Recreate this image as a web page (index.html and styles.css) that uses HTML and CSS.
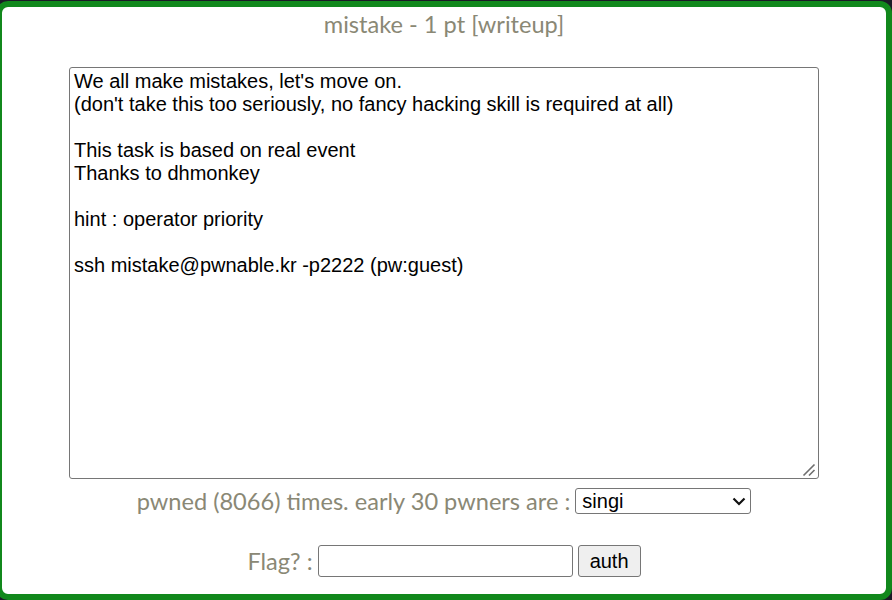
FILE: index.html
```html
<!DOCTYPE html>
<html>
<head>
<meta charset="utf-8">
<link rel="stylesheet" href="styles.css">
</head>
<body>
<div class="frame">
  <div class="title">mistake - 1 pt [writeup]</div>
  <div class="desc-wrap">
    <textarea class="desc">We all make mistakes, let's move on.
(don't take this too seriously, no fancy hacking skill is required at all)

This task is based on real event
Thanks to dhmonkey

hint : operator priority

ssh mistake@pwnable.kr -p2222 (pw:guest)</textarea>
    <svg class="grip" width="14" height="14" viewBox="0 0 14 14"><path d="M1.5 12.5 L12.5 1.5 M7 12.5 L12.5 7" stroke="#6f6f6f" stroke-width="1.6" fill="none"/></svg>
  </div>
  <div class="row pwned">
    <span class="label">pwned (8066) times. early 30 pwners are :</span>
    <span class="select-wrap">
      <select class="pwners"><option>singi</option></select>
      <svg class="chev" width="14" height="9" viewBox="0 0 14 9"><path d="M1.5 1.5 L7 7 L12.5 1.5" stroke="#111" stroke-width="2.2" fill="none"/></svg>
    </span>
  </div>
  <div class="row flag">
    <span class="label">Flag? :</span>
    <input class="flag-input" type="text">
    <button class="auth">auth</button>
  </div>
</div>
</body>
</html>
```
FILE: styles.css
```css
html, body {
  margin: 0;
  padding: 0;
  background: #1b1a26;
  overflow: hidden;
}
.frame {
  box-sizing: border-box;
  margin: 1px 0 0 -4px;
  width: 896px;
  height: 599px;
  border: 6px solid #11881c;
  border-radius: 12px;
  background: #ffffff;
  font-family: Lato, "Liberation Sans", sans-serif;
  color: #8a8875;
}
.title {
  text-align: center;
  font-size: 23.6px;
  line-height: 26px;
  padding-top: 4px;
  margin-bottom: 30px;
}
.desc-wrap {
  position: relative;
  width: 750px;
  height: 412px;
  margin: 0 auto;
}
.desc {
  display: block;
  box-sizing: border-box;
  margin: 0;
  width: 750px;
  height: 412px;
  padding: 2px 4px;
  border: 1px solid #767676;
  border-radius: 3px;
  font-family: "Liberation Sans", Arial, sans-serif;
  font-size: 20px;
  line-height: 23px;
  color: #000;
  resize: none;
  outline: none;
}
.grip {
  position: absolute;
  right: 3px;
  bottom: 2px;
}
.row {
  display: flex;
  justify-content: center;
  align-items: center;
  gap: 5px;
  font-size: 23.6px;
  line-height: 26px;
}
.pwned {
  margin-top: 9px;
}
.flag {
  margin-top: 31px;
}
.select-wrap {
  position: relative;
  display: inline-block;
  height: 26px;
}
.pwners {
  display: block;
  box-sizing: border-box;
  width: 176px;
  height: 26px;
  border: 1px solid #767676;
  border-radius: 3px;
  background: #fff;
  font-family: "Liberation Sans", Arial, sans-serif;
  font-size: 20px;
  color: #000;
  padding: 0 6px;
  appearance: none;
  -webkit-appearance: none;
}
.chev {
  position: absolute;
  right: 5px;
  top: 9px;
  pointer-events: none;
}
.flag-input {
  box-sizing: border-box;
  width: 255px;
  height: 32px;
  border: 1px solid #767676;
  border-radius: 3px;
  font-family: "Liberation Sans", Arial, sans-serif;
  font-size: 20px;
  padding: 1px 2px;
}
.auth {
  box-sizing: border-box;
  width: 63px;
  height: 32px;
  border: 1px solid #767676;
  border-radius: 3px;
  background: #efefef;
  font-family: "Liberation Sans", Arial, sans-serif;
  font-size: 20px;
  color: #000;
  padding: 1px 6px;
}
```
